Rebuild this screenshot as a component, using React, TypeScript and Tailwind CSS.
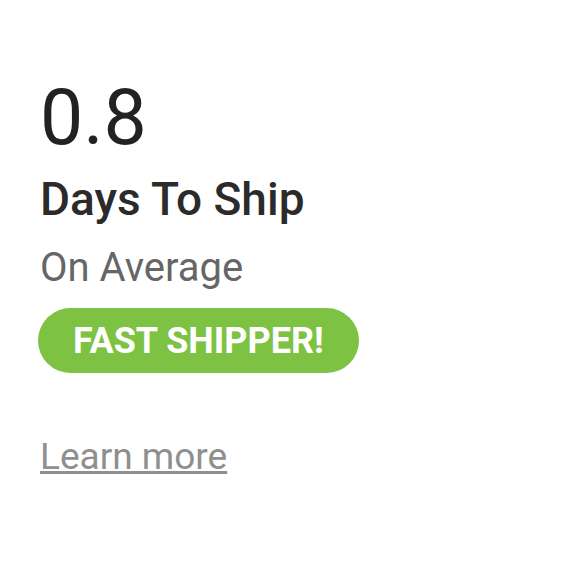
export default function App() {
  return (
    <div
      className="min-h-screen bg-white pl-10 pt-[78px]"
      style={{ fontFamily: "Roboto, 'Liberation Sans', sans-serif" }}
    >
      <div className="flex flex-col items-start">
        <div className="text-[77px] leading-[80px] text-[#222222]">0.8</div>
        <div className="mt-[15px] text-[46px] leading-[52px] font-medium text-[#2b2b2b]">Days To Ship</div>
        <div className="mt-[21px] text-[40px] leading-[44px] text-[#666666]">On Average</div>
        <div className="mt-[18px] -ml-[2px] flex h-[65px] items-center rounded-full bg-[#7dc243] px-[35px]">
          <span className="text-[36px] leading-[40px] font-bold text-white">FAST SHIPPER!</span>
        </div>
        <a href="#" className="mt-[63px] text-[37px] leading-[42px] text-[#8f8f8f] underline">
          Learn more
        </a>
      </div>
    </div>
  );
}
